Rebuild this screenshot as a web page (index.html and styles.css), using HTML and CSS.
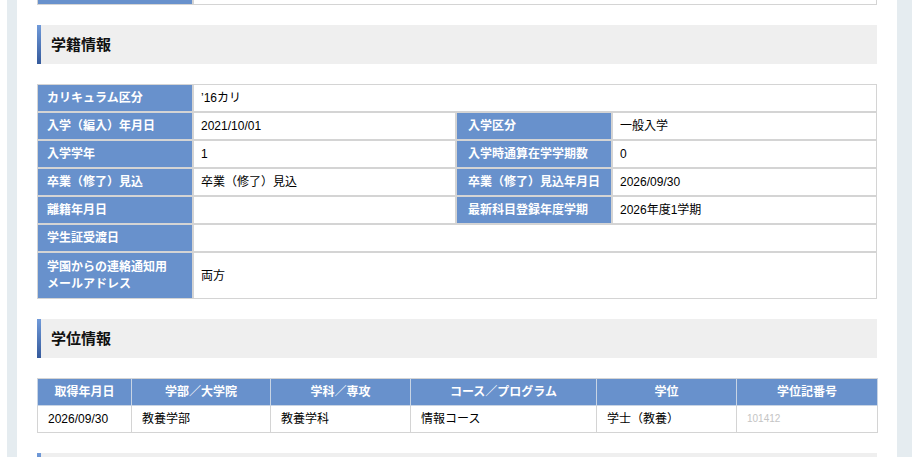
FILE: index.html
```html
<!DOCTYPE html>
<html lang="ja">
<head>
    <meta charset="UTF-8">
    <title>学籍情報</title>
    <link rel="stylesheet" href="styles.css">
</head>
<body>
    <div class="page">
        <div class="content">
            <!-- previous block (scrolled off) -->
            <table class="info info-prev">
                <colgroup>
                    <col class="c-label"><col class="c-value"><col class="c-label2"><col class="c-value2">
                </colgroup>
                <tr>
                    <th></th>
                    <td colspan="3"></td>
                </tr>
            </table>

            <h2 class="section-title">学籍情報</h2>
            <table class="info">
                <colgroup>
                    <col class="c-label"><col class="c-value"><col class="c-label2"><col class="c-value2">
                </colgroup>
                <tr>
                    <th>カリキュラム区分</th>
                    <td colspan="3">’16カリ</td>
                </tr>
                <tr>
                    <th>入学（編入）年月日</th>
                    <td>2021/10/01</td>
                    <th class="th-right">入学区分</th>
                    <td>一般入学</td>
                </tr>
                <tr>
                    <th>入学学年</th>
                    <td>1</td>
                    <th class="th-right">入学時通算在学学期数</th>
                    <td>0</td>
                </tr>
                <tr>
                    <th>卒業（修了）見込</th>
                    <td>卒業（修了）見込</td>
                    <th class="th-right">卒業（修了）見込年月日</th>
                    <td>2026/09/30</td>
                </tr>
                <tr>
                    <th>離籍年月日</th>
                    <td></td>
                    <th class="th-right">最新科目登録年度学期</th>
                    <td>2026年度1学期</td>
                </tr>
                <tr>
                    <th>学生証受渡日</th>
                    <td colspan="3"></td>
                </tr>
                <tr class="row-tall">
                    <th>学園からの連絡通知用<br>メールアドレス</th>
                    <td colspan="3">両方</td>
                </tr>
            </table>

            <h2 class="section-title">学位情報</h2>
            <table class="degree">
                <colgroup>
                    <col style="width: 94px"><col style="width: 139px"><col style="width: 140px">
                    <col style="width: 186px"><col style="width: 140px"><col style="width: 141px">
                </colgroup>
                <tr>
                    <th>取得年月日</th>
                    <th>学部／大学院</th>
                    <th>学科／専攻</th>
                    <th>コース／プログラム</th>
                    <th>学位</th>
                    <th>学位記番号</th>
                </tr>
                <tr>
                    <td>2026/09/30</td>
                    <td>教養学部</td>
                    <td>教養学科</td>
                    <td>情報コース</td>
                    <td>学士（教養）</td>
                    <td class="masked">101412</td>
                </tr>
            </table>

            <h2 class="section-title"></h2>
        </div>
    </div>
</body>
</html>
```

FILE: styles.css
```css
body {
    margin: 0;
    background-color: #ffffff;
    font-family: "Liberation Sans", "Noto Sans CJK JP", sans-serif;
    font-size: 12px;
    color: #000;
    overflow: hidden;
}

.page {
    margin-left: 7px;
    padding: 0 15px 0 10px;
    background-color: #e5ecf0;
    min-height: 457px;
}

.content {
    background-color: #ffffff;
    padding: 0 20px 40px 20px;
}

/* section header bar */
.section-title {
    margin: 20px 0;
    height: 39px;
    line-height: 39px;
    padding-left: 10px;
    background-color: #efefef;
    border-left: 4px solid #5078b8;
    border-image: linear-gradient(#729cdb, #33589a) 1;
    font-size: 15px;
    font-weight: bold;
    color: #111;
}

/* key/value table */
.info {
    width: 840px;
    table-layout: fixed;
    border-collapse: separate;
    border-spacing: 0;
}

.info .c-label { width: 156px; }
.info .c-value { width: 263px; }
.info .c-label2 { width: 156px; }
.info .c-value2 { width: 265px; }

.info th,
.info td {
    border: 1px solid #d4d4d4;
    padding: 5px 9px;
    line-height: 16px;
    height: 16px;
    text-align: left;
    vertical-align: middle;
}

.info th {
    background-color: #6891cc;
    color: #ffffff;
    font-weight: bold;
}

.info td {
    padding-left: 7px;
}

.info .th-right {
    padding-left: 11px;
}

.info .row-tall th,
.info .row-tall td {
    padding-top: 6px;
    padding-bottom: 5px;
    line-height: 17px;
}

.info-prev {
    margin-top: -23px;
}

/* degree table */
.degree {
    width: 840px;
    table-layout: fixed;
    border-collapse: collapse;
    border: 1px solid #d4d4d4;
}

.degree th,
.degree td {
    border: 1px solid #d4d4d4;
    line-height: 16px;
    height: 16px;
    padding: 5px 10px;
}

.degree th {
    background-color: #6891cc;
    color: #ffffff;
    font-weight: bold;
    text-align: center;
    border-color: #c8d4e4;
    border-top-color: #d4d4d4;
}

.degree td {
    text-align: left;
}

.degree .masked {
    color: #c4c4c4;
    font-size: 10px;
}
```
